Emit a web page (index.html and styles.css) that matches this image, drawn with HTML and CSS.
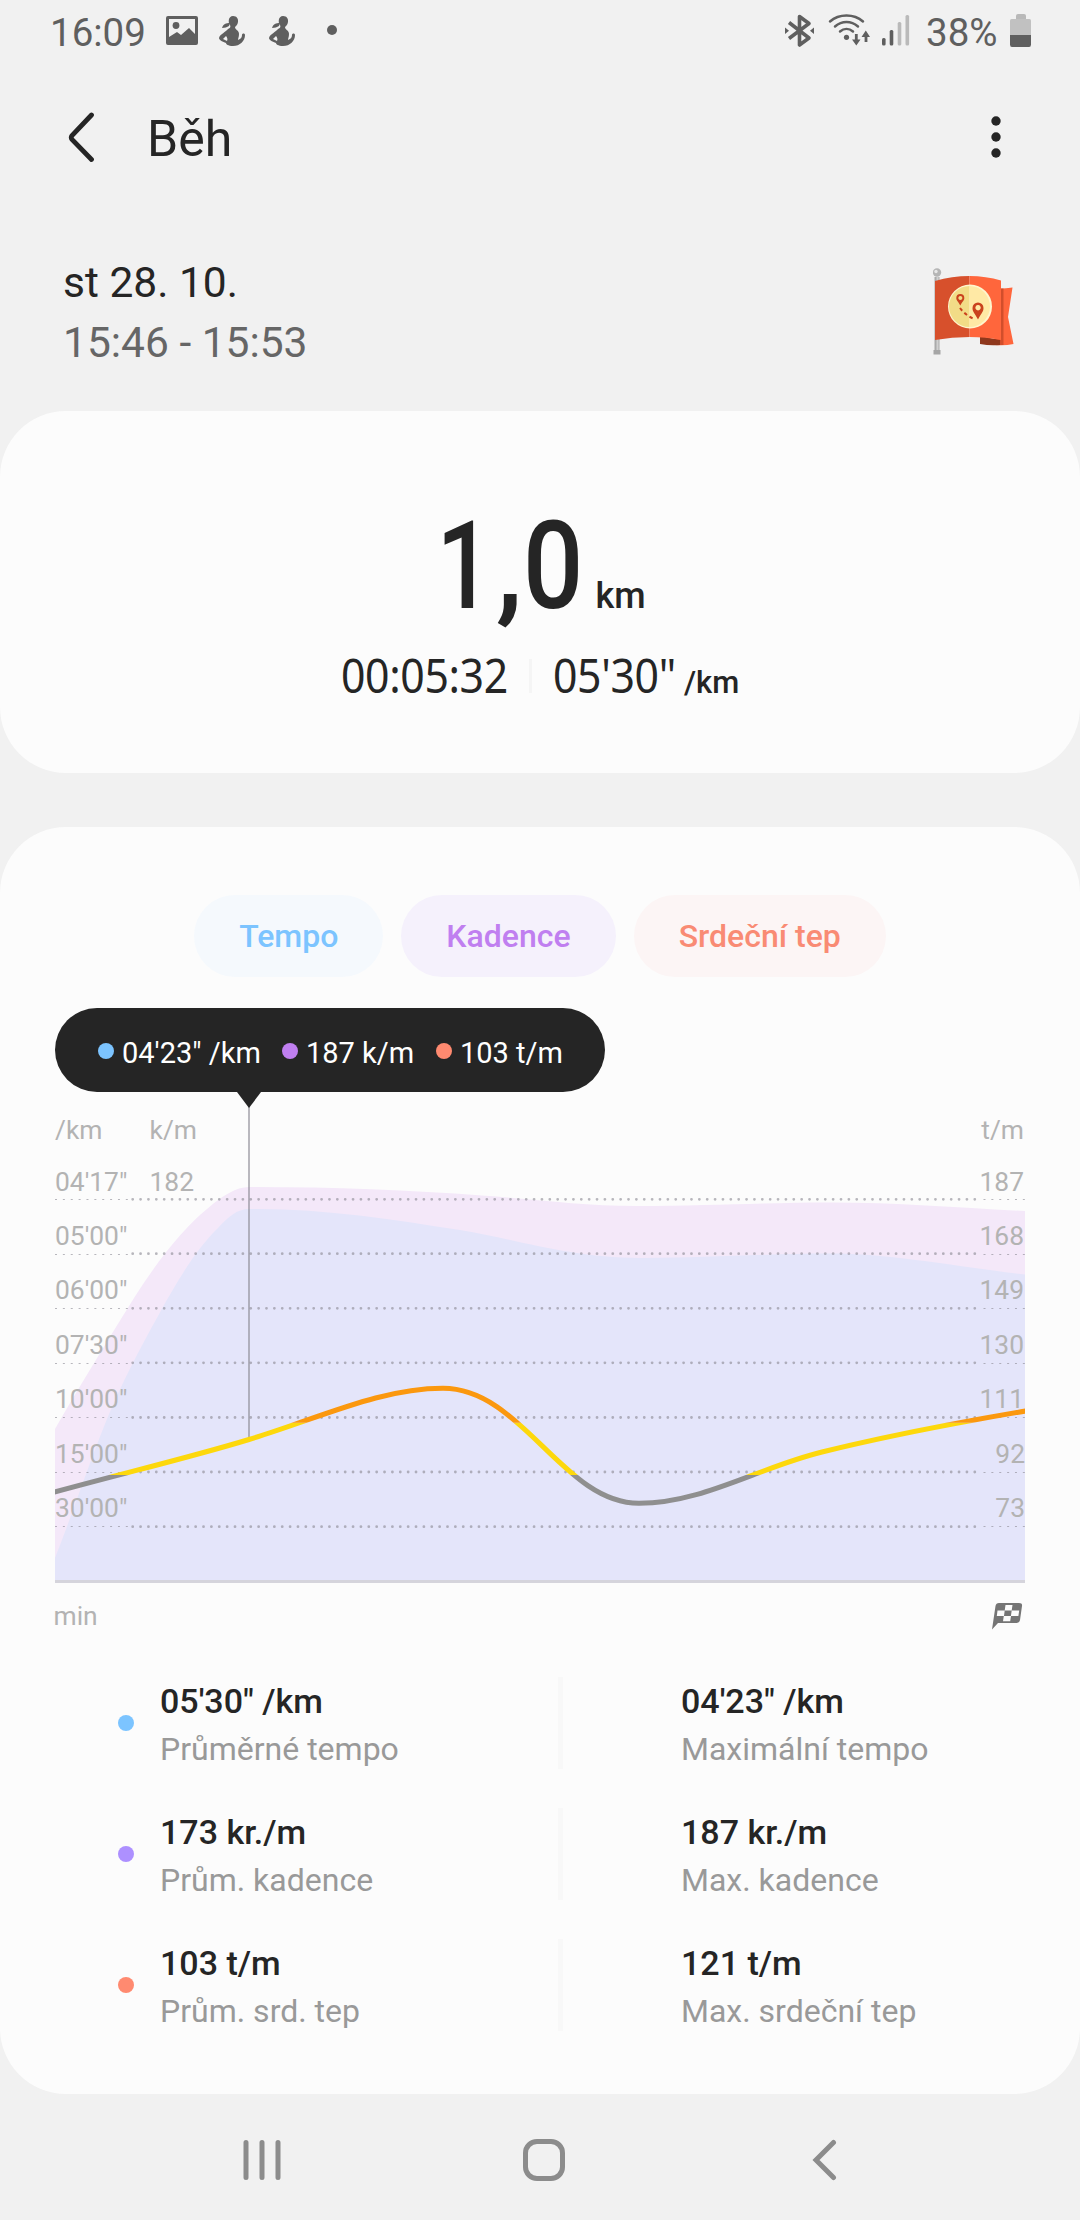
FILE: index.html
```html
<!DOCTYPE html>
<html lang="cs">
<head>
    <meta charset="UTF-8">
    <title>Běh</title>
    <link rel="stylesheet" href="styles.css">
</head>
<body>

<div class="status">
    <span class="clock">16:09</span>
    <svg class="status-left" width="172" height="34" viewBox="166 14 172 34">
        <path fill="#5f5f5f" fill-rule="evenodd" d="M168 16h28q2 0 2 2v25q0 2-2 2h-28q-2 0-2-2V18q0-2 2-2zm1 3v18l8-5 4 3 8-7 6 6V19z"/>
        <circle cx="176" cy="25.5" r="3.4" fill="#5f5f5f"/>
        <g id="figure" fill="#5f5f5f">
            <path d="M233 16c4 0 5.500 3 5 6s-2 4-3 5c0 3 4 3 4 7 0 3-1 4-1 6 3-1 4-3 4-5 0-2 3-2 3 0 0 6-5 11-12 11-5 0-7-2-7-3-3-1-7-3-7-5 1-4 7-6 9-9 2-1 3-2 2-4-2-2-2-9 3-9zm-10 23 4 2c1-2 0-4-1-5z"/>
            <path d="M222 28c1-4 4-5 8-5l-1 3c-2 1-4 2-7 2z"/>
        </g>
        <use href="#figure" x="50"/>
        <circle cx="332" cy="30" r="5" fill="#5f5f5f"/>
    </svg>
    <svg class="status-right" width="126" height="36" viewBox="785 13 126 36">
        <g fill="none" stroke="#5f5f5f" stroke-width="3.6">
            <path d="M789 22.500 809 38l-9.500 7V16.500l9.500 7-20 15" stroke-linejoin="round"/>
            <path stroke-width="2.500" stroke-linecap="round" d="M830 21.500c9-8 24-8 33 0M835 26.500c7-6 16-6 23 0M840 31.500c4-3.500 9-3.500 13 0"/>
            <path stroke-width="2.800" d="M856.300 34v8M866 42v-8"/>
        </g>
        <circle cx="846.500" cy="37.300" r="2.600" fill="#5f5f5f"/>
        <path fill="#5f5f5f" d="M785 27.500v6.500l4-3.300zM814 27.500v6.500l-4-3.300zM852 39.500h8.500l-4.200 6zM861.500 37h8.500l-4.200-6.500z"/>
        <rect x="882" y="38" width="3.600" height="7.500" rx="1.500" fill="#5f5f5f"/>
        <rect x="889.700" y="30" width="3.600" height="15.500" rx="1.500" fill="#5f5f5f"/>
        <rect x="897.700" y="22" width="3.600" height="23.500" rx="1.500" fill="#bababa"/>
        <rect x="905.500" y="15" width="3.600" height="30.500" rx="1.500" fill="#bababa"/>
    </svg>
    <span class="percent">38%</span>
    <svg class="battery" width="22" height="34" viewBox="0 0 22 34">
        <path fill="#b9b9b9" d="M6 5V2q0-2 2-2h6q2 0 2 2v3z"/>
        <path fill="#c1c1c1" d="M0 21V6.500Q0 5 1.500 5h18Q21 5 21 6.500V21z"/>
        <path fill="#5f5f5f" d="M0 21h21v9.500q0 2.500-2 2.500H2q-2 0-2-2.500z"/>
    </svg>
</div>

<div class="header">
    <svg class="back" width="28" height="52" viewBox="0 0 28 52">
        <path d="M23.500 4 4 24.500q-1.500 2 0 4L23.500 48.500"/>
    </svg>
    <h1>Běh</h1>
    <svg class="more" width="10" height="42" viewBox="0 0 10 42">
        <circle cx="5" cy="5" r="4.700"/>
        <circle cx="5" cy="21" r="4.700"/>
        <circle cx="5" cy="37" r="4.700"/>
    </svg>
</div>

<div class="when">
    <div>
        <div class="date">st 28. 10.</div>
        <div class="time">15:46 - 15:53</div>
    </div>
    <svg class="flag" width="84" height="90" viewBox="0 0 84 90">
        <rect x="1.500" y="9" width="5" height="74" fill="#aaa"/>
        <rect x="3.500" y="9" width="2" height="74" fill="#d0d0d0"/>
        <circle cx="4" cy="4.500" r="4.200" fill="#b5b5b5"/>
        <circle cx="3" cy="3.500" r="1.700" fill="#e8e8e8"/>
        <rect x=".5" y="82" width="7" height="4.500" fill="#a6a6a6"/>
        <path fill="#ff663c" d="M62 20.500q9 .5 17.500-1L75 49l5.500 27q-9 2-18.500 1z"/>
        <path fill="#d24e2b" d="M66 20.500h4.500V77L62 77V20.500z"/>
        <path fill="#8f381d" d="M47 68l20 4v5q-10 1-20-1z"/>
        <path fill="#d7502c" d="M2 13q17-5 34.500-5v61Q19 69 2 72z"/>
        <path fill="#ff663c" d="M36.500 8Q53 8 68 12.500V72Q53 69 36.500 69z"/>
        <circle cx="37" cy="38.500" r="22" fill="#fff5cd"/>
        <path fill="#f2dc87" d="M36.500 18a20.500 20.500 0 0 0 0 41z"/>
        <path fill="#ffe9a5" d="M36.500 18a20.500 20.500 0 0 1 0 41z"/>
        <path fill="#ca421d" fill-rule="evenodd" d="M27.300 37.500c-2-4-4-5-4-7.500a4 4 0 0 1 8 0c0 2.500-2 3.500-4 7.500zm0-9.500a2 2 0 1 0 .1 0zM45 51.500c-3-6-5.500-7.500-5.500-11.500a5.500 5.500 0 0 1 11 0c0 4-2.500 5.500-5.500 11.500zm0-14.500a2.700 2.700 0 1 0 .1 0z"/>
        <path fill="none" stroke="#ca421d" stroke-width="2" stroke-dasharray="3.500 3" d="M27 40q5 7 14 11"/>
    </svg>
</div>

<div class="card summary">
    <div class="distance"><span class="one">1</span><span class="comma">,</span><span class="zero">0</span><span class="unit">km</span></div>
    <div class="totals">
        <span class="num duration">00:05:32</span>
        <span class="sep"></span>
        <span class="num pace">05'30"</span>
        <span class="per">/km</span>
    </div>
</div>

<div class="card details">
    <div class="tabs">
        <div class="tab tempo">Tempo</div>
        <div class="tab kadence">Kadence</div>
        <div class="tab tep">Srdeční tep</div>
    </div>

    <div class="bubble">
        <i class="dot blue"></i><span class="b1">04'23" /km</span>
        <i class="dot violet"></i><span class="b2">187 k/m</span>
        <i class="dot red"></i><span class="b3">103 t/m</span>
    </div>

    <svg class="chart" width="972" height="548" viewBox="54 1092 972 548">
        <defs>
            <clipPath id="high"><rect x="55" y="1300" width="970" height="122.700"/></clipPath>
            <clipPath id="mid"><rect x="55" y="1422.700" width="970" height="52.300"/></clipPath>
            <clipPath id="low"><rect x="55" y="1475" width="970" height="80"/></clipPath>
            <path id="heart" d="M50 1493.300C120 1474 190 1457.500 249 1439.500C320 1418 380 1388.300 443 1388.300C522 1388.300 563 1503.300 639 1503.300C702 1503.300 757 1468 822 1452C887 1436 960 1422 1030 1410.300"/>
            <line id="wide" x1="132.700" x2="980" y1="0" y2="0"/>
            <g id="narrow">
                <line x1="55" x2="128" y1="0" y2="0"/>
                <line x1="983.500" x2="1025" y1="0" y2="0"/>
            </g>
        </defs>

        <!-- cadence and pace areas -->
        <path fill="#f4e8f9" d="M55 1429C82 1382 108 1340 134 1298C160 1257 185 1227 207 1209C222 1196 236 1187 249 1187C330 1187 410 1190 482 1195.500C540 1199.500 580 1206 637 1206C710 1206 770 1202.500 830 1202.500C900 1202.500 960 1208 1025 1211V1581H55z"/>
        <path fill="#e4e5fa" d="M55 1558C74 1510 92 1454 112 1407C130 1366 146 1338 164 1305C188 1263 200 1246 218 1228C228 1217 237 1209 249 1209C320 1208 390 1219 460 1230C520 1240 570 1258 641 1258C710 1258 770 1253.500 830 1253.500C890 1253.500 960 1267 1025 1274.500V1581H55z"/>

        <!-- grid -->
        <g class="grid">
            <use href="#wide" y="1199.300"/>
            <use href="#wide" y="1253.700"/>
            <use href="#wide" y="1308.300"/>
            <use href="#wide" y="1362.800"/>
            <use href="#wide" y="1417.500"/>
            <use href="#wide" y="1472"/>
            <use href="#wide" y="1526.700"/>
        </g>
        <g class="grid-thin">
            <use href="#narrow" y="1199.500"/>
            <use href="#narrow" y="1254.500"/>
            <use href="#narrow" y="1308.500"/>
            <use href="#narrow" y="1363.500"/>
            <use href="#narrow" y="1417.500"/>
            <use href="#narrow" y="1472.500"/>
            <use href="#narrow" y="1526.500"/>
        </g>
        <line class="axis" x1="55" x2="1025" y1="1581.500" y2="1581.500"/>
        <line class="cursor" x1="249" x2="249" y1="1106" y2="1438"/>

        <g class="heart">
            <use href="#heart" clip-path="url(#low)" stroke="#8f8f8f"/>
            <use href="#heart" clip-path="url(#mid)" stroke="#fdd80c"/>
            <use href="#heart" clip-path="url(#high)" stroke="#fb980e"/>
        </g>

        <g class="labels">
            <text x="55" y="1139">/km</text>
            <text x="149.500" y="1139">k/m</text>
            <text x="149.500" y="1191">182</text>
            <text x="55" y="1191">04'17"</text>
            <text x="55" y="1245">05'00"</text>
            <text x="55" y="1299">06'00"</text>
            <text x="55" y="1354">07'30"</text>
            <text x="55" y="1408">10'00"</text>
            <text x="55" y="1463">15'00"</text>
            <text x="55" y="1517">30'00"</text>
            <text x="53.500" y="1625">min</text>
        </g>
        <g class="labels right">
            <text x="1024" y="1139">t/m</text>
            <text x="1024" y="1191">187</text>
            <text x="1024" y="1245">168</text>
            <text x="1024" y="1299">149</text>
            <text x="1024" y="1354">130</text>
            <text x="1024" y="1408">111</text>
            <text x="1025" y="1463">92</text>
            <text x="1025" y="1517">73</text>
        </g>

        <!-- finish flag -->
        <path fill="#757575" d="M999 1603h20q3.500 0 3 3l-2 14q-.5 3-4 3h-18l-6 6.500 3.500-23.500q.5-3 3.500-3z"/>
        <path fill="#fcfcfc" d="M1005.500 1605h7l-.8 5.500h-7zM997.500 1610.500h7.200l-.7 5.500h-7.200zM1011.700 1610.500h7.500l-.8 5.500h-7.500zM1003.800 1616h7.200l-.8 5.200h-7.200z"/>
    </svg>

    <div class="stats">
        <div class="stat">
            <i class="dot blue"></i>
            <div class="avg"><b>05'30" /km</b><span>Průměrné tempo</span></div>
            <div class="max"><b>04'23" /km</b><span>Maximální tempo</span></div>
        </div>
        <div class="stat">
            <i class="dot purple"></i>
            <div class="avg"><b>173 kr./m</b><span>Prům. kadence</span></div>
            <div class="max"><b>187 kr./m</b><span>Max. kadence</span></div>
        </div>
        <div class="stat">
            <i class="dot red"></i>
            <div class="avg"><b>103 t/m</b><span>Prům. srd. tep</span></div>
            <div class="max"><b>121 t/m</b><span>Max. srdeční tep</span></div>
        </div>
    </div>
</div>

<div class="nav">
    <svg width="38" height="42" viewBox="0 0 38 42"><path d="M3 3.500v35M19 3.500v35M35 3.500v35"/></svg>
    <svg class="home" width="42" height="42" viewBox="0 0 42 42"><rect x="2.500" y="2.500" width="37" height="37" rx="11.500"/></svg>
    <svg width="26" height="42" viewBox="0 0 26 42"><path d="M21.500 3.500 4 21l17.500 17.500"/></svg>
</div>

</body>
</html>
```

FILE: styles.css
```css
* {
    box-sizing: border-box;
}
body {
    margin: 0;
    width: 1080px;
    height: 2220px;
    overflow: hidden;
    background: #f1f1f1;
    font-family: Roboto, sans-serif;
    color: #252525;
}
svg {
    display: block;
    flex: none;
}

/* status bar */
.status {
    display: flex;
    align-items: center;
    height: 65px;
    padding: 0 48px 0 50px;
    font-size: 38.5px;
    color: #5f5f5f;
}
.clock {
    width: 116px;
}
.status-left {
    margin-bottom: 3px;
}
.status-right {
    margin: 0 15px 3px auto;
}
.percent {
    width: 84px;
}
.battery {
    margin-bottom: 4px;
}

.header {
    display: flex;
    align-items: center;
    height: 148px;
    padding: 0 79px 0 68px;
}
.back {
    margin-bottom: 4px;
    fill: none;
    stroke: #252525;
    stroke-width: 4.8;
    stroke-linecap: round;
}
h1 {
    margin: 0 auto 0 51px;
    font-size: 50px;
    font-weight: 400;
}
.more {
    margin-bottom: 4px;
    fill: #252525;
}

.when {
    display: flex;
    justify-content: space-between;
    height: 198px;
    padding: 40px 63px 0 63px;
    font-size: 42.5px;
    line-height: 60px;
}
.time {
    color: #666;
}
.flag {
    margin-top: 15px;
}

.card {
    background: #fcfcfc;
    border-radius: 66px;
}

/* distance and time */
.summary {
    height: 362px;
    padding-top: 95px;
}
.distance {
    display: flex;
    align-items: baseline;
    justify-content: center;
    height: 122px;
    line-height: 122px;
    font-size: 122px;
    font-weight: 500;
}
.one {
    transform: scaleX(.8);
    transform-origin: 75% 50%;
}
.zero {
    margin-right: -8px;
    transform: scaleX(.87);
    transform-origin: left;
}
.unit {
    margin: 0 8px 0 11px;
    font-size: 36px;
}
.totals {
    display: flex;
    align-items: baseline;
    justify-content: center;
    margin-top: 17px;
    line-height: 60px;
}
.num {
    font-family: "Noto Sans", sans-serif;
    font-size: 47px;
    letter-spacing: -.4px;
    transform: scaleX(.91);
    transform-origin: left;
}
.duration {
    margin-right: -16px;
}
.pace {
    margin-right: -12px;
}
.sep {
    width: 3px;
    height: 34px;
    margin: 0 21px;
    background: #f5f5f5;
}
.per {
    margin-left: 8px;
    font-size: 31px;
    font-weight: 500;
}

/* chart card */
.details {
    height: 1267px;
    margin-top: 54px;
    padding-top: 68px;
}
.tabs {
    display: flex;
    justify-content: center;
    gap: 18px;
}
.tab {
    height: 82px;
    padding: 0 45px;
    border-radius: 41px;
    font-size: 32px;
    font-weight: 500;
    line-height: 82px;
}
.tempo {
    background: #f5f9fd;
    color: #7cc4ff;
}
.kadence {
    background: #f5f1fc;
    color: #c07ff0;
}
.tep {
    background: #fcf5f5;
    color: #f98b74;
}
.bubble {
    position: relative;
    display: flex;
    align-items: center;
    width: 550px;
    height: 84px;
    margin: 31px 0 0 55px;
    padding: 5px 0 0 43px;
    border-radius: 42px;
    background: #252525;
    color: #fff;
    font-size: 29px;
}
.bubble::after {
    content: "";
    position: absolute;
    left: 182px;
    top: 84px;
    border: 12px solid transparent;
    border-top: 16px solid #252525;
    border-bottom: 0;
}
.dot {
    flex: none;
    width: 16px;
    height: 16px;
    border-radius: 50%;
}
.bubble .dot {
    margin: 0 8px 4px 0;
}
.b1 {
    width: 160px;
}
.b2 {
    width: 130px;
}
.blue { background: #7cc4ff; }
.violet { background: #c07ff0; }
.purple { background: #ad90ff; }
.red { background: #ff8a70; }

.chart {
    margin-left: 54px;
}
.grid {
    stroke: #8c8a94;
    stroke-opacity: .62;
    stroke-width: 2.8;
    stroke-linecap: round;
    stroke-dasharray: 0 7.87;
}
.grid-thin {
    stroke: #8c8a94;
    stroke-opacity: .62;
    stroke-width: 1;
    stroke-dasharray: 2 5.87;
}
.axis {
    stroke: #d5d4dc;
    stroke-width: 3;
}
.cursor {
    stroke: #8c8a94;
    stroke-opacity: .6;
    stroke-width: 2;
}
.heart {
    fill: none;
    stroke-width: 5;
}
.labels {
    font-size: 26.4px;
    fill: #b3b3b3;
}
.right {
    text-anchor: end;
}

.stats {
    padding: 37px 0 0 118px;
}
.stat {
    display: flex;
    height: 131px;
    line-height: 48px;
}
.stat .dot {
    margin: 38px 26px 0 0;
}
.avg, .max {
    display: flex;
    flex-direction: column;
    height: 92px;
}
.avg {
    width: 403px;
    border-right: 5px solid #f8f8f8;
}
.max {
    padding-left: 118px;
}
.stat b {
    font-size: 34px;
    font-weight: 500;
}
.stat span {
    font-size: 32px;
    color: #999;
}

/* system buttons */
.nav {
    display: flex;
    justify-content: space-between;
    padding: 45px 242px 0 243px;
}
.nav svg {
    fill: none;
    stroke: #8c8c8c;
    stroke-width: 5;
    stroke-linecap: round;
}
.nav .home {
    margin-right: 6px;
}
```
